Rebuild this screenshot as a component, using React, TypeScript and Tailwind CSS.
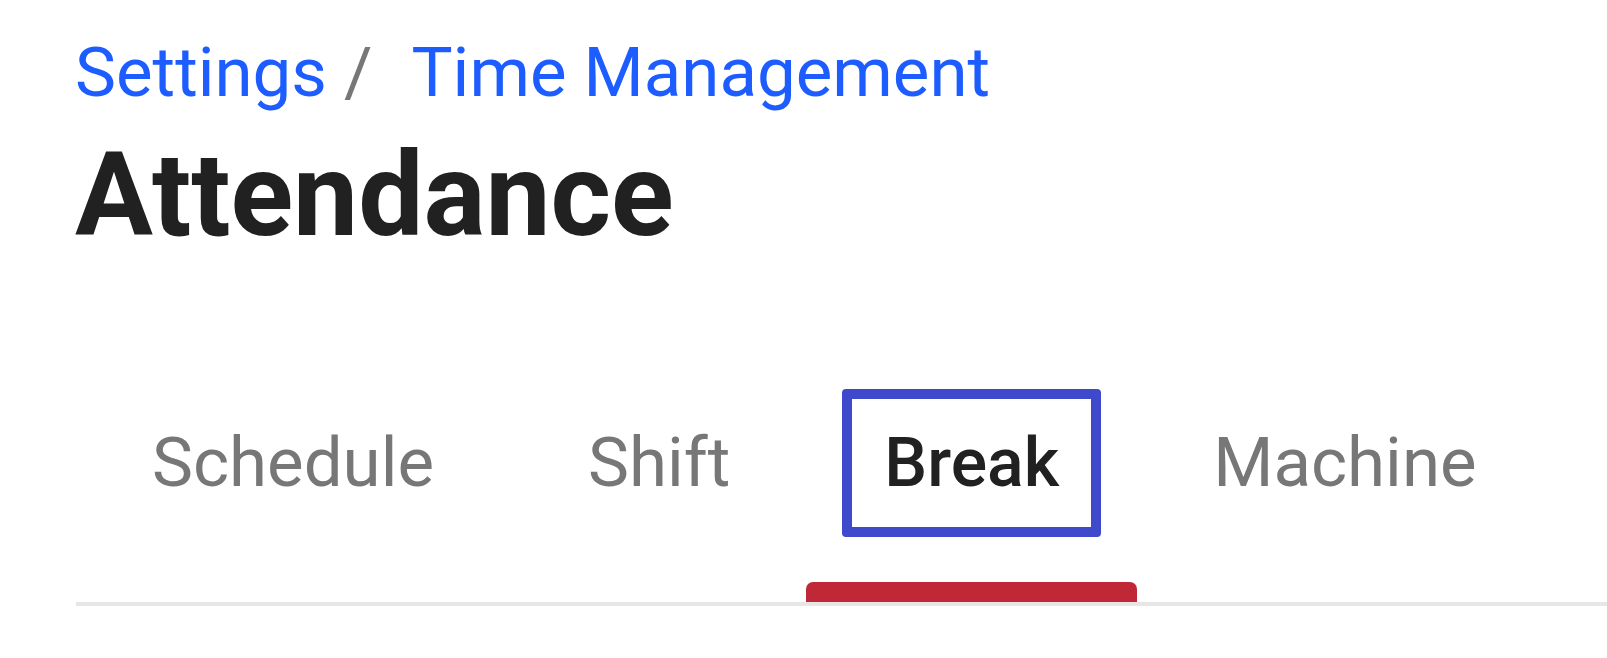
import React from "react";

const tabs = ["Schedule", "Shift", "Break", "Machine"];

const App = () => {
  const active = "Break";
  return (
    <div className="w-full h-[658px] bg-white overflow-hidden font-['Roboto',sans-serif]">
      <div className="pl-[75px] pt-[33px]">
        <nav className="flex items-center text-[69px] leading-[80px]">
          <span className="text-[#1d5cff]">Settings</span>
          <span className="text-[#777777] ml-[17px]">/</span>
          <span className="text-[#1d5cff] ml-[39px]">Time Management</span>
        </nav>
        <h1 className="mt-[15px] text-[116px] leading-[135px] font-bold text-[#212121]">
          Attendance
        </h1>
      </div>

      <div className="mt-[126px] flex pl-[75px]">
        {tabs.map((tab) => {
          const isActive = tab === active;
          return (
            <button key={tab} className="flex flex-col items-center px-[35px] focus:outline-none">
              <span
                className={
                  isActive
                    ? "px-[32px] py-[24px] border-[10px] border-[#3f49cc] rounded-[4px] text-[68px] leading-[80px] font-medium text-[#212121]"
                    : "px-[32px] py-[24px] border-[10px] border-transparent text-[69px] leading-[80px] text-[#777777]"
                }
              >
                {tab}
              </span>
              <div className="mt-[45px] h-[20px] w-[calc(100%+72px)] -mx-[36px]">
                {isActive && <div className="h-full w-full bg-[#c02837] rounded-t-[7px]"></div>}
              </div>
            </button>
          );
        })}
      </div>
      <div className="ml-[76px] h-[4px] bg-[#e6e6e6]"></div>
    </div>
  );
};

export default App;
